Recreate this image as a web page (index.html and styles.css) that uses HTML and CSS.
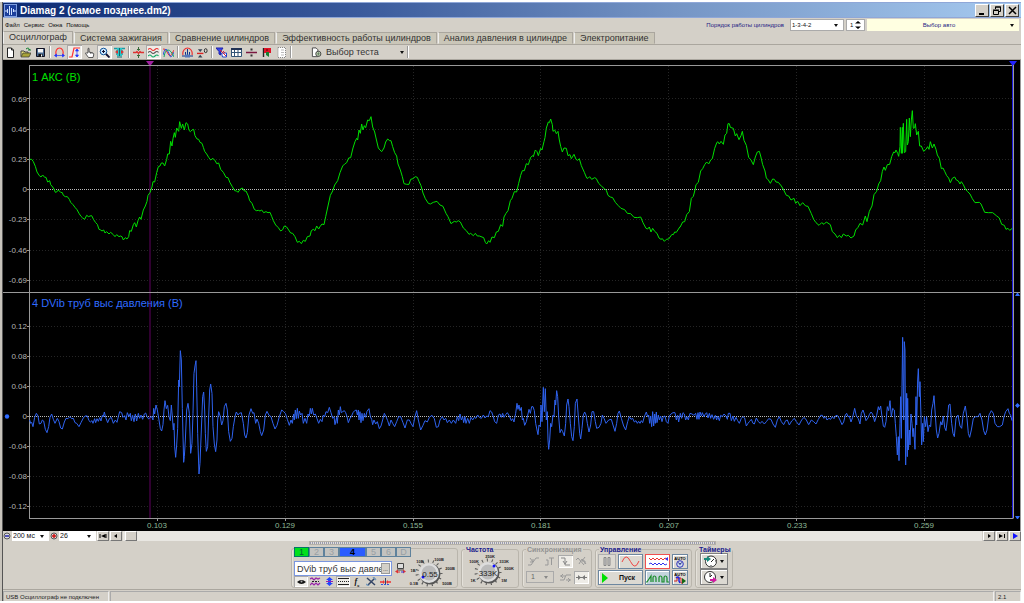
FILE: index.html
```html
<!DOCTYPE html>
<html lang="ru">
<head>
<meta charset="utf-8">
<title>Diamag 2 (самое позднее.dm2)</title>
<link rel="stylesheet" href="styles.css">
</head>
<body>
<div class="window">
  <header class="titlebar">
    <svg class="app-icon" viewBox="0 0 13 13" width="13" height="13"><rect x=".5" y=".5" width="12" height="12" fill="#1c3f9c" stroke="#7f9fe0"/><path d="M1 7h2M3.500 5v4M5.500 2v9M7.500 4v7M9.500 5v3M10 7h2" fill="none" stroke="#cfe0ff"/></svg>
    <h1>Diamag 2 (самое позднее.dm2)</h1>
    <div class="caption-buttons">
      <button aria-label="Свернуть"><svg viewBox="0 0 10 9" width="10" height="9"><path d="M2 8h5" stroke="#000" stroke-width="2"/></svg></button>
      <button aria-label="Восстановить"><svg viewBox="0 0 10 9" width="10" height="9"><path d="M3.500 3V1h5v4.500H7M3 1h6M1.500 4.500h5v4h-5zM1 4h6" fill="none" stroke="#000"/></svg></button>
      <button class="close" aria-label="Закрыть"><svg viewBox="0 0 10 9" width="10" height="9"><path d="M2 1l7 7M9 1L2 8" stroke="#000" stroke-width="1.500"/></svg></button>
    </div>
  </header>

  <div class="menubar">
    <nav class="menu">
      <button>Файл</button><button>Сервис</button><button>Окна</button><button>Помощь</button>
    </nav>
    <label class="order-label" for="order">Порядок работы цилиндров</label>
    <span class="pick order"><select id="order"><option>1-3-4-2</option></select></span>
    <span class="spin"><input id="cyl" aria-label="Цилиндр" value="1"><svg viewBox="0 0 6 10" width="6" height="10"><path d="M0 3.500L3 1l3 2.500zM0 6.500L3 9l3-2.500z"/></svg></span>
    <span class="pick auto"><select id="auto" aria-label="Авто"><option>Выбор авто</option></select></span>
  </div>

  <div class="tabs" role="tablist">
    <button role="tab" aria-selected="true" class="active">Осциллограф</button>
    <button role="tab">Система зажигания</button>
    <button role="tab">Сравнение цилиндров</button>
    <button role="tab">Эффективность работы цилиндров</button>
    <button role="tab">Анализ давления в цилиндре</button>
    <button role="tab">Электропитание</button>
  </div>

  <div class="toolbar">
    <button aria-label="Новый"><svg viewBox="0 0 11 11"><path d="M2.500 1h4l2 2v7.500h-6z" fill="#fff" stroke="#222"/><path d="M6.500 1v2h2" fill="none" stroke="#222"/></svg></button>
    <button aria-label="Открыть"><svg viewBox="0 0 11 11"><path d="M1 9.500V4h3l1 1h3v2" fill="#e9e27a" stroke="#444"/><path d="M1 10l2-4h8l-2 4z" fill="#a8a236" stroke="#333" stroke-width=".7"/><path d="M6 2c2-1.500 3-1 3.500 1M8 3h3" fill="none" stroke="#087a28"/></svg></button>
    <button aria-label="Сохранить"><svg viewBox="0 0 11 11"><path d="M1.500 1.500h8v8h-8z" fill="#4a6a90" stroke="#112"/><path d="M3 2h5v3.500H3z" fill="#f5f5f5"/><path d="M3.500 7h4v2.500h-4z" fill="#111"/><path d="M6 7.500h1v2H6z" fill="#fff"/></svg></button>
    <i></i>
    <button aria-label="Период"><svg viewBox="0 0 11 11"><path d="M2 8C1 4 3 1 5.500 1S10 4 9 8" fill="none" stroke="#f33" stroke-width="1.200"/><path d="M1 8.500h9M2.500 7l-2 1.500 2 1.500zM8.500 7l2 1.500-2 1.500z" fill="#23f" stroke="#23f" stroke-width=".7"/></svg></button>
    <button class="down" aria-label="Амплитуда"><svg viewBox="0 0 11 11"><path d="M0 10h3L5 1h6" fill="none" stroke="#f33" stroke-width="1.200"/><path d="M8 2v8M6.500 4L8 2l1.500 2zM6.500 8L8 10l1.500-2z" fill="#23f" stroke="#23f" stroke-width=".7"/></svg></button>
    <button aria-label="Рука"><svg viewBox="0 0 11 11"><path d="M4 6V1.500q1-1 1 .5v3l4 1q1 .3.700 2L9 10.500H4.500L1.500 6.500q0-1 1-.5z" fill="#fff" stroke="#333" stroke-width=".8"/><path d="M6.500 5v2M8 5.500V7" stroke="#333" stroke-width=".5"/></svg></button>
    <button class="down" aria-label="Лупа"><svg viewBox="0 0 11 11"><circle cx="4.500" cy="4.500" r="3.300" fill="#cde8ff" stroke="#159"/><path d="M7 7l3.500 3.500" stroke="#113" stroke-width="1.800"/><path d="M3 4.500h3M4.500 3v3" stroke="#113"/></svg></button>
    <button aria-label="Масштаб"><svg viewBox="0 0 11 11"><path d="M0 1.500h11M2 4h7M2 7h7" stroke="#1a9aa5" stroke-width="1.400"/><path d="M3 1h5v8H3z" fill="#29c5c8"/><path d="M1 5l3-2v4zM10 5L7 3v4z" fill="#d33"/><path d="M3 10h5M5.500 1v8" stroke="#0a6a70"/></svg></button>
    <i></i>
    <button aria-label="Центр"><svg viewBox="0 0 11 11"><path d="M5.500 0v3M5.500 11V8M4 2l1.500 1.500L7 2M4 9l1.500-1.500L7 9" fill="none" stroke="#396839"/><path d="M0 5.500h3l1-1 1.500 2L7 4.500l1 1h3" fill="none" stroke="#d33" stroke-width="1.300"/></svg></button>
    <button class="down" aria-label="Раздельно"><svg viewBox="0 0 11 11"><g fill="none" stroke-width="1.100"><path d="M0 2.500q2-2 3.500 0t3.500 0 3.500 0" stroke="#e33"/><path d="M0 5.500q2-2 3.500 0t3.500 0 3.500 0" stroke="#555"/><path d="M0 9q2-2 3.500 0t3.500 0 3.500 0" stroke="#1a6"/></g></svg></button>
    <button aria-label="Вместе"><svg viewBox="0 0 11 11"><g fill="none"><path d="M0 2q2-1 4 3t3 4 4-6" stroke="#e33"/><path d="M0 8Q2 0 4 3t3 6 4-4" stroke="#35d"/><path d="M1 10q1-7 4-7t6 7" stroke="#1a6"/></g></svg></button>
    <i></i>
    <button aria-label="Опорная"><svg viewBox="0 0 11 11"><path d="M1 8C0 4 3 1 5.500 1S11 4 10 8" fill="none" stroke="#e33" stroke-width="1.200"/><path d="M0 9h11M3.500 8V5M5.500 9V2M7.500 8V5" stroke="#138"/><path d="M3 7.500h5v3H3z" fill="#57b"/></svg></button>
    <button aria-label="Ноль"><svg viewBox="0 0 12 11"><path d="M0 6.500h7" stroke="#d22" stroke-width="1.500"/><path d="M1 2l2.500 3L6 2zM1 11l2.500-3L6 11z" fill="#345"/><ellipse cx="9.500" cy="3.500" rx="1.500" ry="2.200" fill="none" stroke="#222"/></svg></button>
    <i></i>
    <button aria-label="Фильтр"><svg viewBox="0 0 11 11"><path d="M0 1h7L4.500 4.500V8L3 7V4.500z" fill="#34e" stroke="#22a"/><path d="M5.500 6h5v4h-4z" fill="#fff" stroke="#24c"/><path d="M4 3l6 6M7 4l2 2" stroke="#d23"/></svg></button>
    <button aria-label="Таблица"><svg viewBox="0 0 11 11"><path d="M.5 1.500h10v8H.5zM.5 5.500h10M3.500 2v8M7 2v8" fill="#fff" stroke="#357"/><path d="M0 2h11" stroke="#235" stroke-width="2"/></svg></button>
    <button aria-label="Деление"><svg viewBox="0 0 11 11"><path d="M0 5.500h11" stroke="#7b1840" stroke-width="1.500"/><path d="M4.500 1.500h2v2h-2zM4.500 7.500h2v2h-2z" fill="#333"/></svg></button>
    <button aria-label="Маркер"><svg viewBox="0 0 11 11"><path d="M2.500 1v9" stroke="#222" stroke-width="1.400"/><path d="M3 1h7v5H3z" fill="#e01426"/><path d="M5 5h3v5L5 8z" fill="#188030"/><path d="M5 3h2" stroke="#600"/></svg></button>
    <button aria-label="Заметки"><svg viewBox="0 0 11 11"><path d="M2 .5h7.500v10H2z" fill="#fff" stroke="#888" stroke-dasharray="1 1"/><path d="M5 3h3M5 5.500h3M5 8h3" stroke="#bbb"/></svg></button>
    <i></i>
    <button class="test"><svg viewBox="0 0 12 11" width="12" height="11"><path d="M1.500.5h4l2 2V10h-6z" fill="#fff" stroke="#444"/><circle cx="8" cy="7" r="2.800" fill="#dde8cf" stroke="#333"/><path d="M6 7h4M8 5v4" stroke="#464" stroke-width=".8"/></svg>Выбор теста<b></b></button>
    <i></i>
  </div>

  <svg class="chart" viewBox="3 60 1018 471" role="img" aria-label="Осциллограмма">
    <rect x="3" y="60" width="1018" height="471" fill="#000"/>
    <path class="grid" d="M30 98.500H1012M30 129.500H1012M30 159.500H1012M30 219.500H1012M30 250.500H1012M30 280.500H1012M30 326.500H1012M30 356.500H1012M30 386.500H1012M30 446.500H1012M30 476.500H1012M30 506.500H1012M157.500 66V518M285.500 66V518M413.500 66V518M540.500 66V518M668.500 66V518M796.500 66V518M924.500 66V518"/>
    <path d="M150 62V518" stroke="#300030" stroke-width="2"/>
    <path d="M146 61h8l-3 4h-2z" fill="#a020a0"/>
    <path class="zero" d="M30 189.500H1012M30 416.500H1012"/>
    <path class="frame" d="M29.500 65V518.500M29 65.500H1014M3 292.500H1021M29 518.500H1013M1013.500 65V518.500M1020.500 60V531"/>
    <path class="frame" d="M27 98.500h2M27 129.500h2M27 159.500h2M27 189.500h2M27 219.500h2M27 250.500h2M27 280.500h2M27 326.500h2M27 356.500h2M27 386.500h2M27 416.500h2M27 446.500h2M27 476.500h2M27 506.500h2M157.500 519v2M285.500 519v2M413.500 519v2M540.500 519v2M668.500 519v2M796.500 519v2M924.500 519v2"/>
    <path d="M1012.500 62V518" stroke="#1a1ae0"/>
    <path d="M1009 61h8l-3 4h-2z" fill="#22f"/>
    <circle cx="7" cy="416.500" r="2.200" fill="#2f6bff"/>
    <path d="M1015 296h5l-2-3h-1zM1015 516h5l-2 3h-1zM1015 405.500l2.500-2.500 2.500 2.500-2.500 2.500z" fill="#2f6bff"/>

    <g class="trace green">
      <polyline transform="translate(0 90) scale(.33333)" points="89,208 95,208 100,215 106,229 111,246 118,257 123,261 128,255 134,262 138,262 143,276 149,272 152,284 158,291 162,297 166,307 170,306 175,300 182,307 187,308 190,316 196,320 202,320 208,328 212,337 219,344 225,352 231,359 237,370 243,379 248,384 254,388 260,376 266,380 270,378 275,377 281,389 287,398 292,403 297,418 302,420 306,423 311,420 315,429 320,425 327,432 332,427 340,434 345,440 350,434 357,440 361,438 366,440 370,450 376,443 381,447 386,440 389,422 394,424 400,404 404,398 409,411 414,392 419,381 423,388 430,360 436,348 441,334 444,316 450,308 456,291 459,275 464,276 470,248 475,230 480,228 484,219 489,219 494,228 500,208 503,192 508,192 512,154 516,168 519,146 523,128 526,142 530,114 536,124 539,95 544,115 548,102 553,120 558,98 563,102 567,121 571,125 576,120 581,118 585,137 591,147 596,148 600,157 606,160 610,172 614,184 620,192 626,202 632,210 639,205 646,213 650,221 656,219 662,238 670,247 678,262 684,263 690,278 697,290 704,302 710,303 714,307 721,297 727,294 733,303 738,303 745,318 749,332 756,340 763,358 769,362 775,361 780,363 785,360 791,368 798,365 804,368 810,367 815,379 820,392 827,405 835,413 842,423 848,419 853,408 860,411 866,420 872,429 878,430 885,440 892,457 898,454 904,461 910,451 916,454 922,440 930,438 934,422 940,418 945,422 950,408 956,417 960,410 966,402 972,404 977,380 984,348 991,316 998,303 1004,285 1013,272 1020,248"/>
      <polyline transform="translate(340 90) scale(.33333)" points="0,248 8,228 14,222 20,218 26,204 32,203 39,174 45,155 50,145 53,150 57,120 61,130 65,102 69,120 73,107 77,113 83,90 88,92 93,80 98,111 104,126 108,144 115,174 120,180 125,185 132,174 137,156 143,147 149,152 153,152 158,170 164,188 170,198 174,222 181,240 187,260 192,281 200,283 207,283 212,268 219,266 226,260 232,262 237,274 243,287 249,309 256,326 265,340 271,342 280,337 291,334 300,345 309,349 318,370 324,380 333,401 343,394 349,396 355,392 361,396 370,414 379,422 387,433 392,430 400,437 406,430 412,438 418,438 431,443 436,457 440,462 446,452 450,457 456,441 463,443 469,426 475,424 482,404 488,409 492,381 498,370 504,362 511,332 516,325 523,305 530,306 536,280 542,256 547,242 553,242 559,221 565,224 572,202 578,197 580,200 586,180 591,185 595,197 602,175 606,180 612,155 615,143 619,114 625,96 628,98 632,87 637,104 639,124 644,120 649,131 654,124 658,150 662,169 667,186 672,174 679,175 684,197 690,194 694,206 702,193 708,208 713,211 718,206 724,227 733,247 740,264 744,265 749,260 755,268 764,263 769,266 776,280 784,288 793,296 799,301 804,316 811,321 818,323 826,337 834,346 843,355 854,359 862,370 872,371 882,382 892,383 902,381 909,398 918,415 923,417 928,411 933,426 938,415 944,424 951,430 957,444 963,448 967,446 973,454 979,448 986,447 996,433 1000,434 1004,426 1009,427 1020,410"/>
      <polyline transform="translate(680 90) scale(.33333)" points="0,412 8,396 14,395 20,374 28,365 34,325 40,319 45,300 48,284 55,277 62,243 68,236 74,224 80,216 86,222 92,210 97,206 104,175 110,159 113,155 118,162 123,154 130,163 135,135 140,130 144,101 148,101 151,112 160,115 166,138 170,131 177,149 183,137 187,124 192,151 199,166 206,202 213,210 220,224 226,201 232,186 238,184 242,198 248,224 255,243 259,264 265,270 271,280 278,267 283,268 288,276 295,277 304,288 311,300 319,316 326,318 333,330 342,325 347,340 353,334 360,347 368,338 377,348 384,349 394,371 401,388 408,398 417,406 425,398 432,403 439,396 451,404 457,425 465,432 472,443 478,436 484,443 490,432 499,438 505,436 513,444 522,438 527,420 534,412 540,400 548,405 556,378 561,395 568,364 576,348 582,314 590,304 596,282 602,272 607,244 612,231 616,241 622,224 629,223 635,200 641,186 645,188 648,180 653,190 656,199 660,170 661,112 664,190 667,112 667,190 670,100 673,188 677,185 680,88 682,165 685,155 688,84 691,140 694,90 697,62 700,115 704,113 706,101 710,135 715,124 719,168 724,168 731,184 738,178 743,170 747,178 751,155 757,174 762,162 768,178 772,195 778,205 784,236 789,234 794,244 800,257 806,264 811,278 817,265 824,261 829,270 835,273 840,282 844,275 850,284 856,297 863,305 870,312 877,326 885,338 898,337 903,342 914,367 925,368 938,368 949,377 958,384 965,403 973,406 978,418 984,415 989,421 997,415"/>
    </g>
    <g class="trace blue">
      <polyline transform="translate(0 300) scale(.33333)" points="89,360 92,370 95,367 99,380 104,352 109,340 114,348 118,372 123,370 127,360 131,363 136,388 141,398 146,380 150,352 155,342 160,358 165,370 172,355 177,365 182,384 187,387 193,366 198,355 204,356 210,350 215,356 220,355 225,368 230,370 237,380 243,368 250,354 255,348 262,348 267,362 271,366 276,362 279,370 284,356 287,368 291,356 295,364 299,353 303,363 307,346 310,350 313,336 317,352 323,368 328,356 334,352 340,370 346,360 351,367 355,350 359,335 365,338 369,352 374,347 378,360 382,338 387,350 391,340 394,362 398,346 402,365 406,342 410,363 415,340 419,355 423,345 428,358 433,342 437,339 441,350 446,357 451,352 455,350 459,360 461,325 464,342 468,315 472,330 477,360 481,386 485,393 489,374 492,330 495,302 499,326 503,316 507,350 511,362 514,315 517,350 520,390 522,370 524,440 527,472 530,435 533,385 536,240 538,260 541,152 544,180 547,325 551,487 553,470 556,420 560,330 564,310 568,340 572,460 576,430 579,340 582,220 585,198 588,182 590,260 593,400 597,522 600,490 604,390 608,290 611,276 614,330 616,400 619,454 623,440 626,350 629,270 632,252 636,280 639,380 643,432 647,455 651,420 653,360 656,335 661,350 665,375 669,362 673,320 678,310 682,330 686,395 691,424 696,415 700,380 706,345 709,336 714,345 718,340 724,338 730,370 734,405 738,414 742,398 747,345 753,326 758,340 762,338 767,370 771,357 776,370 781,395 785,407 791,390 796,345 801,334 807,346 813,350 819,370 825,387 831,376 838,350 845,330 850,334 856,340 862,358 868,376 873,360 877,370 881,342 883,360 886,330 889,356 892,325 895,355 898,333 902,345 906,340 910,370 915,355 920,370 924,342 928,348 931,325 934,342 937,325 941,345 946,342 951,356 956,370 961,358 966,365 970,345 974,350 978,335 983,338 988,322 993,338 998,355 1002,350 1005,374 1010,352 1012,370 1015,330 1018,345 1021,320 1024,338 1028,335 1033,332 1037,338 1041,350 1045,368 1050,355 1054,350 1059,338 1064,332 1069,330 1072,345 1075,330 1077,360 1080,335 1083,368 1086,340 1089,362 1093,340 1097,352 1101,334 1107,326 1111,350 1115,358 1118,374 1122,360 1127,372 1132,365 1138,386 1143,378 1148,360 1153,340 1158,350 1163,362 1168,378 1173,360 1178,370 1184,380 1190,365 1196,350 1202,350 1209,368 1215,384 1222,360 1228,360 1233,370 1239,380 1245,350 1250,332 1255,360 1262,390 1269,376 1275,362 1282,366 1288,352 1296,346 1303,356 1309,382 1315,380 1320,360 1327,350 1332,360 1337,355 1342,368 1348,360 1354,370 1360,360 1367,370 1372,350 1376,362 1380,342 1384,360 1388,350 1391,368 1395,350 1398,370 1403,355 1408,370 1413,352 1418,360 1423,352 1428,355 1433,345 1438,352 1444,355 1450,345 1455,354 1460,348 1465,350 1470,332 1475,336 1480,350 1484,365 1490,370 1495,345 1500,342"/>
      <polyline transform="translate(500 290) scale(.33333)" points="0,372 4,382 8,370 12,382 17,374 22,368 28,378 34,392 38,386 42,396 47,370 51,340 54,358 57,345 60,362 64,352 67,390 70,385 74,406 79,395 84,372 87,358 91,370 95,350 99,350 103,362 107,400 111,420 114,434 117,405 121,410 123,345 126,395 130,292 133,365 136,296 139,390 142,365 144,450 146,478 149,450 152,400 155,410 159,375 162,380 165,330 167,345 170,302 173,320 176,380 180,428 184,418 188,425 193,438 197,400 200,345 204,327 207,350 211,400 215,440 219,452 223,410 226,340 231,327 235,380 239,430 242,447 246,415 250,375 254,366 258,375 262,400 267,426 272,405 276,365 281,365 286,395 290,415 297,412 303,400 307,375 312,385 318,400 326,390 334,388 339,405 345,424 350,400 354,370 358,363 364,385 371,408 377,420 383,395 388,380 393,388 398,385 403,396 408,392 412,400 416,394 420,400 424,392 428,398 433,380 439,366 443,380 446,375 449,400 452,378 455,410 458,365 461,408 464,372 466,400 469,366 471,398 475,375 478,390 482,378 486,395 490,380 495,378 499,395 504,400 508,378 513,372 519,368 525,368 529,390 533,376 536,396 541,370 545,385 549,368 553,372 557,390 561,380 565,390 570,370 576,372 582,376 587,370 591,388 594,368 597,388 600,366 604,378 607,368 612,380 616,372 620,368 624,384 628,370 632,385 636,374 641,388 646,376 650,390 653,378 658,392 662,376 667,380 672,372 678,378 682,388 685,370 690,370 694,392 699,378 703,394 708,382 713,392 718,400 724,385 729,380 734,384 739,408 744,400 748,395 754,388 759,400 763,402 769,384 775,395 781,400 786,394 793,402 799,395 806,386 813,388 819,402 826,412 832,390 838,380 844,395 851,404 857,392 862,390 868,405 875,393 883,385 889,395 897,405 905,390 912,382 919,390 926,404 934,390 941,395 948,402 955,388 962,376 967,376 972,385 977,380 981,390 987,385 992,388 997,380 1002,386 1008,376 1014,378 1020,390 1026,404 1031,396 1036,375 1040,370 1044,380 1048,378 1053,396 1058,382 1064,355 1069,378 1075,386 1080,402 1084,370 1089,360 1094,375 1098,392 1104,384 1108,374 1113,366 1118,372 1124,395 1130,376 1135,350 1138,360 1142,348 1146,380 1150,408 1154,412 1158,395 1162,350 1166,362 1170,332 1174,380 1178,355 1183,360 1186,400 1189,440 1192,495 1195,440 1197,512 1200,400 1202,320 1204,445 1206,290 1208,142 1211,390 1213,155 1215,180 1217,525 1220,310 1222,500 1223,325 1225,480 1228,420 1230,465 1233,372 1236,400 1239,440 1241,415 1245,478 1248,320 1250,405 1253,270 1255,236 1258,320 1260,275 1263,380 1265,465 1268,400 1270,455 1273,380 1277,410 1280,380 1284,425 1288,405 1292,410 1295,360 1299,340 1302,317 1305,360 1309,420 1313,444 1317,430 1322,395 1326,405 1330,378 1334,412 1338,422 1342,390 1346,345 1350,342 1355,400 1359,430 1363,440 1368,385 1374,375 1380,408 1385,415 1390,370 1396,348 1401,385 1405,430 1409,442 1414,420 1420,385 1427,380 1434,380 1440,370 1446,390 1451,422 1456,435 1461,420 1467,375 1474,362 1480,370 1485,400 1492,410 1499,410 1507,405 1512,380 1517,365 1524,356 1528,370 1532,376 1536,392"/>
    </g>
    <g class="names"><text x="32" y="81" fill="#00e000">1 АКС (В)</text><text x="32" y="307" fill="#2f6bff">4 DVib труб выс давления (В)</text></g>
    <g class="ylabels"><text x="27" y="102">0.69</text><text x="27" y="132">0.46</text><text x="27" y="162">0.23</text><text x="27" y="192">0</text><text x="27" y="222">-0.23</text><text x="27" y="253">-0.46</text><text x="27" y="283">-0.69</text><text x="27" y="329">0.12</text><text x="27" y="359">0.08</text><text x="27" y="389">0.04</text><text x="27" y="419">0</text><text x="27" y="449">-0.04</text><text x="27" y="479">-0.08</text><text x="27" y="509">-0.12</text></g>
    <g class="xlabels"><text x="157" y="528">0.103</text><text x="285" y="528">0.129</text><text x="413" y="528">0.155</text><text x="541" y="528">0.181</text><text x="669" y="528">0.207</text><text x="797" y="528">0.233</text><text x="924" y="528">0.259</text></g>
  </svg>

  <div class="scrollrow">
    <button class="zoom" aria-label="Уменьшить"><svg viewBox="0 0 8 8" width="8" height="8"><circle cx="4" cy="4" r="3" fill="#ddd" stroke="#555"/><path d="M2 4h4" stroke="#22a" stroke-width="1.500"/></svg></button>
    <span class="pick"><select aria-label="Время"><option>200 мс</option></select></span>
    <button class="zoom" aria-label="Увеличить"><svg viewBox="0 0 8 8" width="8" height="8"><circle cx="4" cy="4" r="3" fill="#ddd" stroke="#555"/><path d="M2 4h4M4 2v4" stroke="#c11" stroke-width="1.500"/></svg></button>
    <span class="pick"><select aria-label="Масштаб"><option>26</option></select></span>
    <button aria-label="В начало"><svg viewBox="0 0 8 6" width="8" height="6"><path d="M1 1v4M7 1v4" stroke="#000"/><path d="M6.500 1v4L2 3z"/></svg></button>
    <button aria-label="Назад"><svg viewBox="0 0 8 6" width="8" height="6"><path d="M5 1v4L2 3z"/></svg></button>
    <div class="track"><button aria-label="Позиция"></button></div>
    <button aria-label="Вперёд"><svg viewBox="0 0 8 6" width="8" height="6"><path d="M3 1v4l3-2z"/></svg></button>
    <button aria-label="В конец"><svg viewBox="0 0 8 6" width="8" height="6"><path d="M1 1v4l4-2zM6 1h1v4H6z"/></svg></button>
    <button aria-label="Следить"><svg viewBox="0 0 8 6" width="8" height="6"><path d="M2 0v6l5-3z" fill="#11f"/></svg></button>
  </div>

  <div class="panel">
    <div class="splitter"></div>
    <div class="groups">
      <div class="group channel">
        <div class="chans"><button class="on">1</button><button>2</button><button>3</button><button class="cur">4</button><button>5</button><button>6</button><button>D</button></div>
        <div class="left">
          <div class="source">
            <span class="field"><input aria-label="Датчик" value="DVib труб выс давления"><button aria-label="Выбрать">...</button></span>
            <button class="flat" aria-label="Экран"><svg viewBox="0 0 11 11" width="11" height="11"><path d="M2.500.5h6v5h-6z" fill="#ddd" stroke="#444"/><path d="M2 7h7" stroke="#444"/><path d="M0 8.500l3-2v4zM8 6.500l3 2-3 2z" fill="#d33"/><path d="M3 9h2" stroke="#d33"/><path d="M6 9h3" stroke="#33d"/></svg></button>
          </div>
          <div class="tools">
            <button class="down" aria-label="Показать"><svg viewBox="0 0 11 9"><path d="M1 5q4.500-4 9 0-4.500 4-9 0z" fill="#111"/><circle cx="5.500" cy="4.500" r="1" fill="#aaa"/></svg></button>
            <button aria-label="Сигнал"><svg viewBox="0 0 11 9"><path d="M0 2l2-1 2 2 2-2 2 1 2-1M0 8l2-2 2 2 2-2 2 2 2-2" fill="none" stroke="#92a" stroke-width="1.200"/><path d="M2 4.500h7" stroke="#222" stroke-dasharray="2 1"/></svg></button>
            <button aria-label="Вверх-вниз"><svg viewBox="0 0 11 9"><path d="M5.500 0L9 3H7v3h2L5.500 9 2 6h2V3H2z" fill="#24f"/><path d="M2 4.500h7" stroke="#92a"/></svg></button>
            <button class="down" aria-label="Уровни"><svg viewBox="0 0 11 9"><path d="M0 1.500h11M0 7.500h11" stroke="#222"/><path d="M0 4.500h11" stroke="#222" stroke-dasharray="1 1"/></svg></button>
            <button aria-label="Функция"><em>f<sub>x</sub></em></button>
            <button aria-label="Настройки"><svg viewBox="0 0 11 9"><path d="M1 1l8 7M9 1L2 8" stroke="#346" stroke-width="1.500"/><path d="M7 0l3 3M0 7l3 2" stroke="#79b" stroke-width="1.500"/></svg></button>
            <button aria-label="Сдвиг"><svg viewBox="0 0 11 9"><path d="M0 5h4M7 5h4" stroke="#e33" stroke-width="1.500"/><path d="M5.500 1v7" stroke="#346"/><path d="M3 3l2 2-2 2zM8 3L6 5l2 2z" fill="#e33"/><path d="M1 7.500h9" stroke="#35d" stroke-dasharray="2 1"/></svg></button>
          </div>
        </div>
        <svg class="knob" viewBox="408 558 50 29" width="50" height="29">
          <circle cx="430" cy="573" r="12" fill="none" stroke="#555" stroke-width="3" stroke-dasharray="1 4"/><circle cx="431" cy="574" r="10.500" fill="#555"/><circle cx="430" cy="573" r="10" fill="#ddd"/><circle cx="430" cy="573" r="7.500" fill="#bbb"/><circle cx="424" cy="577" r="1.500" fill="#11f"/>
          <text class="value" x="431" y="577">0.55</text>
          <g><text x="415" y="585">0.1В</text><text x="414" y="572">1В</text><text x="421" y="563">10В</text><text x="440" y="561">100В</text><text x="451" y="570">200В</text><text x="448" y="585">500В</text></g>
        </svg>
      </div>
      <fieldset class="freq"><legend>Частота</legend>
        <svg class="knob" viewBox="464 555 56 32" width="56" height="32">
          <circle cx="490" cy="574" r="12" fill="none" stroke="#555" stroke-width="3" stroke-dasharray="1 4"/><circle cx="491" cy="575" r="10.500" fill="#555"/><circle cx="490" cy="574" r="10" fill="#ddd"/><circle cx="490" cy="574" r="7.500" fill="#bbb"/><circle cx="496" cy="568" r="1.500" fill="#11f"/>
          <text class="value" x="490" y="578">333K</text>
          <g><text x="475" y="584">1K</text><text x="476" y="565">100K</text><text x="492" y="560">250K</text><text x="506" y="565">333K</text><text x="511" y="572">500K</text><text x="506" y="584">1M</text></g>
        </svg>
      </fieldset>
      <fieldset class="sync" disabled><legend>Синхронизация</legend>
        <div class="row">
          <button aria-label="Фронт 1"><svg viewBox="0 0 11 9"><path d="M0 8h3l5-7h3M2 1l3 4M5 2v3H2" fill="none" stroke="#999"/></svg></button>
          <button aria-label="Фронт 2"><svg viewBox="0 0 11 9"><path d="M1 8h3V3H2M5 1h5M7.500 1v7" fill="none" stroke="#999"/></svg></button>
          <button class="down" aria-label="Фронт 3"><svg viewBox="0 0 11 9"><path d="M1 1h4v7h5M3 4l2 3 2-3" fill="none" stroke="#888"/></svg></button>
          <button aria-label="Фронт 4"><svg viewBox="0 0 11 9"><path d="M0 3l2-2 6 7M3 7l3-5 4 5M9 0L6 4h3v3" fill="none" stroke="#999"/></svg></button>
        </div>
        <div class="row">
          <span class="pick"><select aria-label="Канал"><option>1</option></select></span>
          <button aria-label="Линия"><svg viewBox="0 0 11 9"><path d="M0 7h4l2-5h5M0 3h5M6 7h5M3 1L1 3l2 2M8 5l2 2-2 2" fill="none" stroke="#999"/></svg></button>
          <button class="down" aria-label="Сжать"><svg viewBox="0 0 11 9"><path d="M0 4.500h11" stroke="#777"/><path d="M2 2l3 2.500L2 7zM9 2L6 4.500 9 7z" fill="#777"/></svg></button>
        </div>
      </fieldset>
      <fieldset class="control"><legend>Управление</legend>
        <div class="buttons">
          <button class="pale" aria-label="Пауза"><svg viewBox="0 0 10 11" width="10" height="11"><path d="M2 1.500h2v8H2zM6 1.500h2v8H6z" fill="#ccc" stroke="#888"/></svg></button>
          <button aria-label="Синус"><svg viewBox="0 0 19 11" width="19" height="11"><path d="M1 6Q5-4 9.500 5.500T18 5" fill="none" stroke="#e44"/></svg></button>
          <button class="red" aria-label="Сигналы"><svg viewBox="0 0 20 11" width="20" height="11"><path d="M1 2l2 2 2-2 2 2 2-2 2 2 2-2 2 2 2-2 2 1" fill="none" stroke="#e33"/><path d="M1 8l2-1 2 2 2-2 2 2 2-2 2 2 2-2 2 2 2-1" fill="none" stroke="#33e"/><path d="M20 1l-3 2 3 2z" fill="#33e"/></svg></button>
          <button aria-label="Авто таймер"><svg viewBox="0 0 12 12" width="12" height="12"><text x="6" y="4">AUTO</text><circle cx="6" cy="8" r="3.300" fill="#cde" stroke="#33b"/><path d="M4.500 6.500L6 8.500 7.500 6.500" fill="none" stroke="#117"/></svg></button>
          <button class="start"><svg viewBox="0 0 7 10" width="7" height="10"><path d="M0 0l6 5-6 5z" fill="#00e000"/></svg>Пуск</button>
          <button class="bluebtn" aria-label="Импульсы"><svg viewBox="0 0 23 10" width="23" height="10"><path d="M0 9h1l4-6v6M7 9V5q0-2 1.500-2T10 5v4M13 9V5q0-2 1.500-2T16 5v4h2V5q0-2 1.500-2T21 5v4h2" fill="none" stroke="#178c28" stroke-width="1.200"/></svg></button>
          <button aria-label="Авто пуск"><svg viewBox="0 0 12 12" width="12" height="12"><text x="6" y="4">AUTO</text><path d="M0 9h3V6h4v5h2" fill="none" stroke="#c22"/><path d="M2 6q2-2 3 0v3l1 2" fill="none" stroke="#22d" stroke-width="1.500"/><path d="M8 6l4 3-4 3z" fill="#161"/></svg></button>
        </div>
      </fieldset>
      <fieldset class="timers"><legend>Таймеры</legend>
        <button aria-label="Таймер 1"><svg viewBox="0 0 13 13" width="13" height="13"><circle cx="7" cy="6.500" r="5.500" fill="#fff" stroke="#333"/><path d="M7 7l3-3" stroke="#222"/><path d="M0 3h3V1l4 3-4 3V5H0z" fill="#198a7c"/><path d="M12 6h-1M7 11v-1" stroke="#333"/></svg><b></b></button>
        <button aria-label="Таймер 2"><svg viewBox="0 0 13 13" width="13" height="13"><circle cx="6" cy="6" r="5.500" fill="#fff" stroke="#333"/><path d="M6 2v4l2-2" fill="none" stroke="#222"/><path d="M6 8h3V6l4 3-4 3v-2H6z" fill="#d018a0"/></svg><b></b></button>
      </fieldset>
    </div>
  </div>

  <footer class="status"><span class="msg">USB Осциллограф не подключен</span><span class="fill"></span><span class="ver">2.1</span></footer>
</div>
</body>
</html>
```
FILE: styles.css
```css
* { box-sizing: border-box; }
body { margin: 0; padding: 2px 3px 3px 0; background: #fff; font: 6px/8px "Liberation Sans", Arial, sans-serif; color: #111; }
button, input, select { font: inherit; color: inherit; margin: 0; padding: 0; border: 0; background: none; border-radius: 0; }
select { appearance: none; width: 100%; height: 100%; outline: 0; opacity: 1; }
svg { display: block; flex: none; }

.window { border-left: 2px solid #c8c4bc; box-shadow: inset 1px 0 #555; padding-left: 1px; background: #d4d0c8; }

.titlebar { display: flex; align-items: center; height: 16px; padding: 0 2px 0 1px; gap: 3px; background: linear-gradient(90deg, #0d2a72, #3a5a9c 35%, #7595c5 66%, #a6caf0); border-top: 1px solid #8fa7d8; border-bottom: 1px solid #8fa7d8; }
.titlebar h1 { flex: 1; margin: 0; color: #fff; font: bold 10px/13px "Liberation Sans", Arial, sans-serif; }
.caption-buttons { display: flex; gap: 1px; }
.caption-buttons button { width: 14px; height: 13px; display: grid; place-items: center; background: #d4d0c8; border: 1px solid; border-color: #fff #404040 #404040 #fff; }

.menubar { display: flex; align-items: center; height: 14px; padding-right: 2px; gap: 2px; }
.menu { display: flex; flex: 1; gap: 4px; padding-left: 2px; }
.order-label { color: #1c1c84; margin-right: 4px; }
.pick { position: relative; display: block; height: 12px; background: #fff; }
.pick::after { content: ""; position: absolute; right: 5px; top: 50%; margin-top: -1px; border: 2px solid transparent; border-top: 3px solid #111; border-bottom: 0; pointer-events: none; }
.order { width: 54px; border: 1px solid #aaa; padding-left: 1px; }
.spin { display: flex; align-items: center; width: 19px; height: 12px; padding-right: 3px; background: #fff; border: 1px solid #aaa; }
.spin input { width: 10px; padding-left: 3px; flex: 1; min-width: 0; }
.auto { width: 152px; background: #ffffe1; color: #1c1c84; }
.auto select { text-align: center; text-align-last: center; padding-right: 8px; }

.tabs { display: flex; align-items: flex-end; height: 13px; border-bottom: 1px solid #aaa69e; }
.tabs button { height: 12px; padding: 0 5px; font-size: 9px; line-height: 11px; color: #333; background: #cac6b8; border: 1px solid; border-color: #aaa69e #aaa69e transparent #eee; margin-right: 1px; white-space: nowrap; }
.tabs .active { height: 13px; background: #d4d0c8; }

.toolbar { display: flex; align-items: center; height: 15px; border-bottom: 1px solid #aaa69e; }
.toolbar button { width: 15px; height: 14px; display: grid; place-items: center; flex: none; }
.toolbar button svg { width: 11px; height: 11px; }
.down { background: #eeece7; box-shadow: inset 1px 1px #aaa, inset -1px -1px #fff; }
.toolbar i { width: 2px; height: 12px; margin: 0 1px; border-left: 1px solid #999; border-right: 1px solid #fff; }
.toolbar .test { display: flex; align-items: center; gap: 4px; width: auto; margin-left: 18px; font-size: 9px; color: #333; }
.test b, .timers b { border: 2px solid transparent; border-top: 3px solid #111; border-bottom: 0; }
.test b { margin: 0 2px 0 17px; }

.chart { width: 100%; height: auto; }
.chart .grid { stroke: #252525; stroke-dasharray: 1 2; }
.chart .zero { stroke: #b8b8b8; stroke-dasharray: 1 1; }
.chart .frame { stroke: #999; }
.trace { fill: none; }
.trace polyline { vector-effect: non-scaling-stroke; stroke-width: 1px; }
.green { stroke: #00e000; }
.blue { stroke: #2f63f0; }
.names { font-size: 11px; }
.ylabels { font-size: 8px; fill: #b4b4b4; text-anchor: end; }
.xlabels { font-size: 8px; fill: #8fb896; text-anchor: middle; }

.scrollrow { display: flex; height: 10px; gap: 1px; background: #d4d0c8; font-size: 7px; }
.scrollrow button { width: 12px; display: grid; place-items: center; background: #d4d0c8; border: 1px solid; border-color: #fff #777 #777 #fff; }
.scrollrow .zoom { width: 8px; border: 0; }
.scrollrow .pick { width: 37px; height: 10px; padding-left: 1px; }
.track { flex: 1; display: flex; padding-left: 2px; background: #e9e7e2; }

.panel { height: 49px; display: flex; flex-direction: column; align-items: center; border-bottom: 1px solid #aaa69e; }
.splitter { width: 407px; height: 4px; border: 1px solid #b5b1a8; background: repeating-linear-gradient(90deg, #999bb0 0 1px, #e2dfd8 1px 2px); }
.groups { display: flex; align-items: flex-end; gap: 3px; padding-top: 1px; }
.group, fieldset { min-width: 0; margin: 0; padding: 0; border: 1px solid #b9b5ac; border-radius: 3px; box-shadow: inset 1px 0 #e4e1da; }
fieldset { height: 42px; }
legend { margin-left: 3px; padding: 0 1px; color: #1b1b8c; font-weight: bold; font-size: 7px; line-height: 7px; height: 7px; }

.channel { width: 167px; height: 40px; display: grid; grid-template-columns: 115px 50px; grid-template-rows: 9px 29px; }
.chans { display: flex; grid-column: 1 / 3; padding-left: 2px; margin-top: -2px; height: 10px; }
.chans button { width: 15px; line-height: 8px; font-size: 9px; color: #98a0a4; background: #c3c3c0; border: 1px solid #5f829c; }
.chans .on { background: #00e01c; color: #063; border-color: #076; }
.chans .cur { width: 27px; background: #2a5cff; color: #000; font-weight: bold; }
.left { padding-left: 2px; }
.source { display: flex; align-items: center; gap: 3px; padding-top: 3px; }
.field { display: flex; width: 98px; height: 15px; padding: 1px; background: #fff; border: 1px solid #7a96df; }
.field input { flex: 1; min-width: 0; padding-left: 1px; font-size: 9px; color: #333; }
.field button { width: 9px; background: #d4d0c8; border: 1px solid #999; line-height: 6px; }
.tools { display: flex; }
.tools button { width: 14px; height: 11px; display: grid; place-items: center; }
.tools svg, .sync svg { width: 11px; height: 9px; }
.tools em { font: italic bold 8px/8px "Liberation Serif", serif; }
.tools sub { font-size: 5px; line-height: 0; }

.knob text { font: bold 4px "Liberation Sans", Arial, sans-serif; text-anchor: middle; fill: #222; }
.knob .value { font: 8px "Liberation Sans", Arial, sans-serif; }
.freq { width: 58px; }
.sync { width: 70px; }
.sync legend { color: #929292; }
.row { display: flex; height: 16px; align-items: center; padding-left: 3px; gap: 1px; }
.row button { width: 15px; height: 13px; display: grid; place-items: center; flex: none; }
.row .pick { width: 28px; height: 12px; margin-right: 3px; padding-left: 4px; background: none; border: 1px solid #aaa; color: #666; font-size: 7px; }
.row .pick::after { border-top-color: #888; }

.control { width: 97px; }
.buttons { display: grid; grid-template-columns: 18px 25px 25px 16px; gap: 1px 2px; padding: 1px 2px; }
.buttons button, .timers button { display: flex; align-items: center; justify-content: center; height: 15px; background: #dcd9d2; border: 1px solid #6d87a0; box-shadow: inset 1px 1px #fff; }
.buttons .pale { border-color: #b0b0b0; box-shadow: none; }
.buttons .red { background: #fff; border-color: #f05050; }
.buttons .bluebtn { background: #c4d4dc; }
.buttons .start { grid-column: 1 / 3; gap: 10px; font-size: 7px; font-weight: bold; padding-right: 4px; }
.buttons text { font: bold 4px "Liberation Sans", Arial, sans-serif; text-anchor: middle; }
.timers { width: 38px; }
.timers legend { margin-left: 2px; }
.timers button { width: 28px; height: 16px; margin: 0 0 0 4px; gap: 3px; border-color: #808080; }

.status { display: flex; gap: 1px; height: 11px; padding-top: 1px; color: #222; }
.status span { padding: 1px 2px; border-top: 1px solid #aaa; border-left: 1px solid #aaa; border-right: 1px solid #eee; }
.msg { width: 106px; white-space: nowrap; }
.fill { flex: 1; }
.ver { width: 26px; }
```
